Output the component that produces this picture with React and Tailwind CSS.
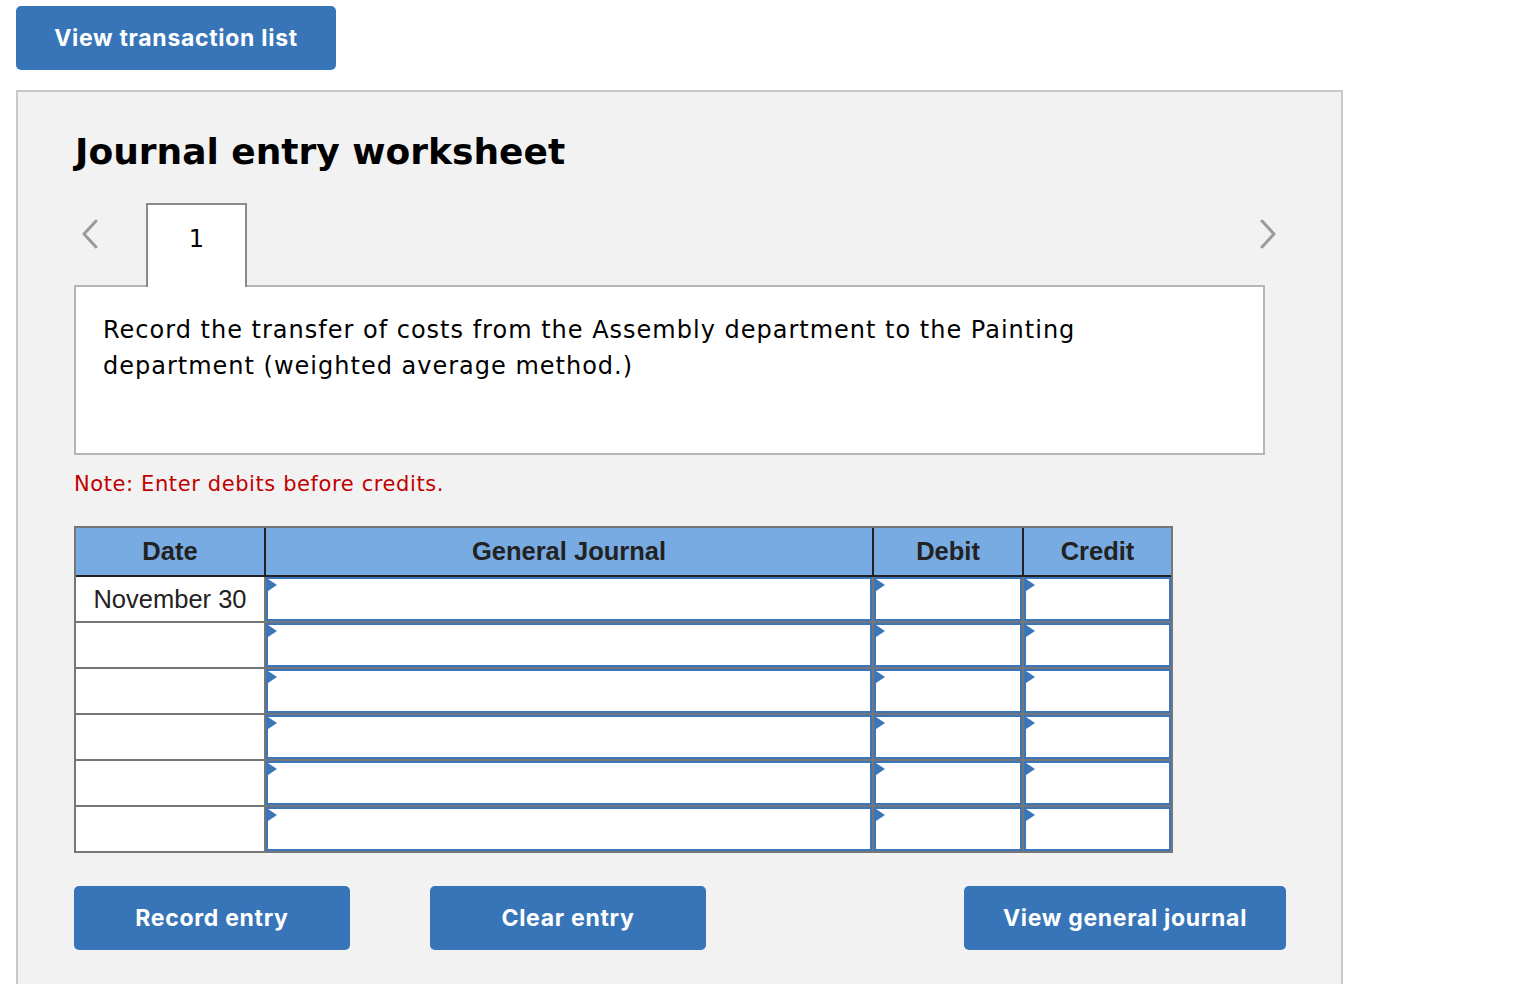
import React from "react";

const Tri = () => (
  <span className="absolute left-0 top-0 h-0 w-0 border-y-[6px] border-l-[9px] border-y-transparent border-l-[#3a76b9]" />
);

const InputCell = ({ w, last }) => (
  <div className={`relative h-full ${w} ${last ? "" : "border-r-2 border-[#767676]"}`}>
    <div className="relative h-full w-full border-2 border-[#3a76b9] bg-white">
      <Tri />
    </div>
  </div>
);

const Chevron = ({ dir }) => (
  <svg width="20" height="32" viewBox="0 0 20 32" fill="none">
    {dir === "left" ? (
      <polyline points="16,3 4,16 16,29" stroke="#9a9a9a" strokeWidth="3" strokeLinecap="round" strokeLinejoin="round" />
    ) : (
      <polyline points="4,3 16,16 4,29" stroke="#9a9a9a" strokeWidth="3" strokeLinecap="round" strokeLinejoin="round" />
    )}
  </svg>
);

const Btn = ({ children, w }) => (
  <button
    className={`${w} h-16 rounded-[5px] bg-[#3775b8] text-[23px] font-bold tracking-[0.7px] text-white`}
    style={{ fontFamily: "Inter, 'Liberation Sans', sans-serif" }}
  >
    {children}
  </button>
);

export default function App() {
  const rows = ["November 30", "", "", "", "", ""];
  return (
    <div className="min-h-screen bg-white" style={{ fontFamily: "'DejaVu Sans', Verdana, sans-serif" }}>
      <div className="pl-4 pt-[6px]">
        <Btn w="w-[320px]">View transaction list</Btn>
      </div>
      <div className="ml-4 mt-5 h-[894px] w-[1327px] border-2 border-b-0 border-[#c9c9c9] bg-[#f2f2f2] px-[56px] pt-[38px]">
        <h2 className="ml-[1px] text-[36px] font-bold leading-[44px] text-black">Journal entry worksheet</h2>
        <div className="mt-[29px] flex h-[82px] w-[1204px] items-start">
          <div className="flex h-[62px] w-[72px] items-center pl-[6px]">
            <Chevron dir="left" />
          </div>
          <div className="relative z-10 -mb-[2px] flex h-[84px] w-[101px] items-start justify-center border-2 border-b-0 border-[#8a8a8a] bg-white pt-[16px] text-[24px] text-black">
            1
          </div>
          <div className="flex-1" />
          <div className="flex h-[62px] w-[20px] items-center">
            <Chevron dir="right" />
          </div>
        </div>
        <div className="h-[170px] w-[1191px] border-2 border-[#b5b5b5] bg-white pl-[27px] pt-[25px] text-[24px] leading-[36px] tracking-[1px] text-black">
          Record the transfer of costs from the Assembly department to the Painting
          <br />
          department (weighted average method.)
        </div>
        <div className="mt-[17px] text-[21px] leading-[24px] tracking-[0.6px] text-[#c00000]">
          Note: Enter debits before credits.
        </div>
        <div
          className="mt-[30px] w-[1099px] border-2 border-[#767676] text-[#222]"
          style={{ fontFamily: "'Liberation Sans', Arial, sans-serif" }}
        >
          <div className="flex h-[49px] border-b-2 border-[#222] bg-[#77abe1] text-[25.5px] font-bold">
            <div className="flex w-[190px] items-center justify-center border-r-2 border-[#222]">Date</div>
            <div className="flex w-[608px] items-center justify-center border-r-2 border-[#222]">General Journal</div>
            <div className="flex w-[150px] items-center justify-center border-r-2 border-[#222]">Debit</div>
            <div className="flex w-[147px] items-center justify-center">Credit</div>
          </div>
          {rows.map((d, i) => (
            <div
              key={i}
              className={`flex ${i < rows.length - 1 ? "h-[46px] border-b-2 border-[#767676]" : "h-[44px]"}`}
            >
              <div className="flex h-full w-[190px] items-center justify-center border-r-2 border-[#767676] bg-white text-[25.5px] text-[#222]">
                {d}
              </div>
              <InputCell w="w-[608px]" />
              <InputCell w="w-[150px]" />
              <InputCell w="w-[147px]" last />
            </div>
          ))}
        </div>
        <div className="mt-[33px] flex w-[1212px] items-center">
          <Btn w="w-[276px]">Record entry</Btn>
          <div className="w-[80px]" />
          <Btn w="w-[276px]">Clear entry</Btn>
          <div className="flex-1" />
          <Btn w="w-[322px]">View general journal</Btn>
        </div>
      </div>
    </div>
  );
}
